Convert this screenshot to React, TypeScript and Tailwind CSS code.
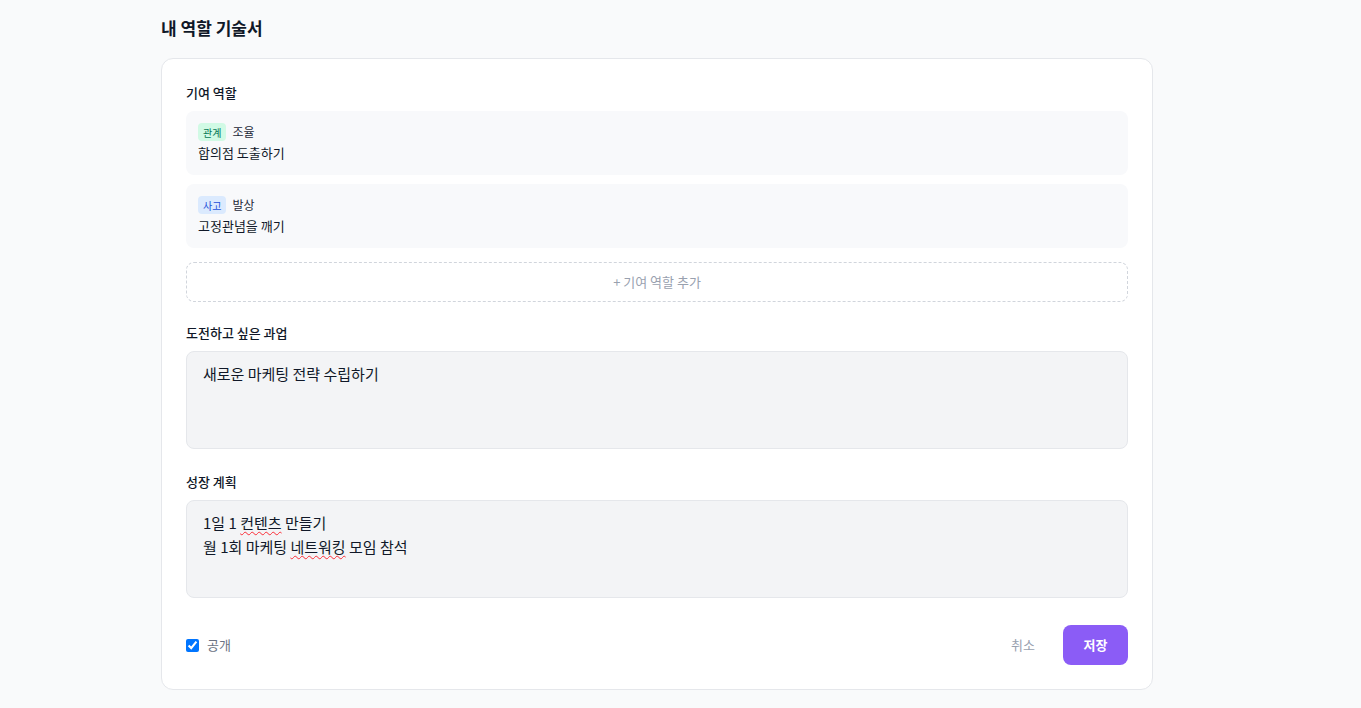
import React from 'react';

const font = { fontFamily: '"Noto Sans CJK KR", "Noto Sans", sans-serif' };

function RoleItem({ tag, tagClass, title, desc }: { tag: string; tagClass: string; title: string; desc: string }) {
  return (
    <div className="rounded-lg bg-[#f8f9fb] px-3 pt-3 pb-3">
      <div className="flex items-center gap-1.5 h-[18px]">
        <span className={`rounded px-[5px] h-[18px] flex items-center text-[10px] ${tagClass}`}>{tag}</span>
        <span className="text-xs text-gray-800">{title}</span>
      </div>
      <p className="mt-[2px] text-[13px] leading-5 text-gray-900">{desc}</p>
    </div>
  );
}

export default function App() {
  return (
    <div className="min-h-screen bg-[#f9fafb] pl-[161px] pt-[14px] pb-4" style={font}>
      <div className="w-[992px]">
        <h1 className="text-[17px] leading-7 font-semibold text-gray-900">내 역할 기술서</h1>

        <div className="mt-4 rounded-xl border border-gray-200 bg-white px-6 pt-6 pb-6">
          <h2 className="text-[13px] leading-5 font-medium text-gray-900">기여 역할</h2>
          <div className="mt-2 flex flex-col gap-[9px]">
            <RoleItem tag="관계" tagClass="bg-[#d1fae5] text-[#047857]" title="조율" desc="합의점 도출하기" />
            <RoleItem tag="사고" tagClass="bg-[#dbeafe] text-[#1d4ed8]" title="발상" desc="고정관념을 깨기" />
          </div>
          <button className="mt-[14px] h-10 w-full rounded-lg border border-dashed border-gray-300 text-[13px] text-gray-400">
            + 기여 역할 추가
          </button>

          <h2 className="mt-[21px] text-[13px] leading-5 font-medium text-gray-900">도전하고 싶은 과업</h2>
          <div className="mt-2 h-[98px] rounded-lg border border-gray-200 bg-[#f3f4f6] px-4 pt-[10px] text-[15px] leading-6 text-gray-900">
            새로운 마케팅 전략 수립하기
          </div>

          <h2 className="mt-[23px] text-[13px] leading-5 font-medium text-gray-900">성장 계획</h2>
          <div className="mt-2 h-[98px] rounded-lg border border-gray-200 bg-[#f3f4f6] px-4 pt-[10px] text-[15px] leading-6 text-gray-900">
            <p>
              1일 1 <span className="underline decoration-wavy decoration-red-500 decoration-1 underline-offset-2">컨텐츠</span> 만들기
            </p>
            <p>
              월 1회 마케팅 <span className="underline decoration-wavy decoration-red-500 decoration-1 underline-offset-2">네트워킹</span> 모임 참석
            </p>
          </div>

          <div className="mt-[27px] flex items-center justify-between">
            <label className="flex items-center gap-2 text-[13px] text-gray-500">
              <input type="checkbox" defaultChecked className="h-[13px] w-[13px]" />
              공개
            </label>
            <div className="flex items-center gap-3">
              <button className="h-10 px-4 text-[13px] text-gray-400">취소</button>
              <button className="h-10 w-[65px] rounded-lg bg-[#8b5cf6] text-[13px] font-semibold text-white">저장</button>
            </div>
          </div>
        </div>
      </div>
    </div>
  );
}
